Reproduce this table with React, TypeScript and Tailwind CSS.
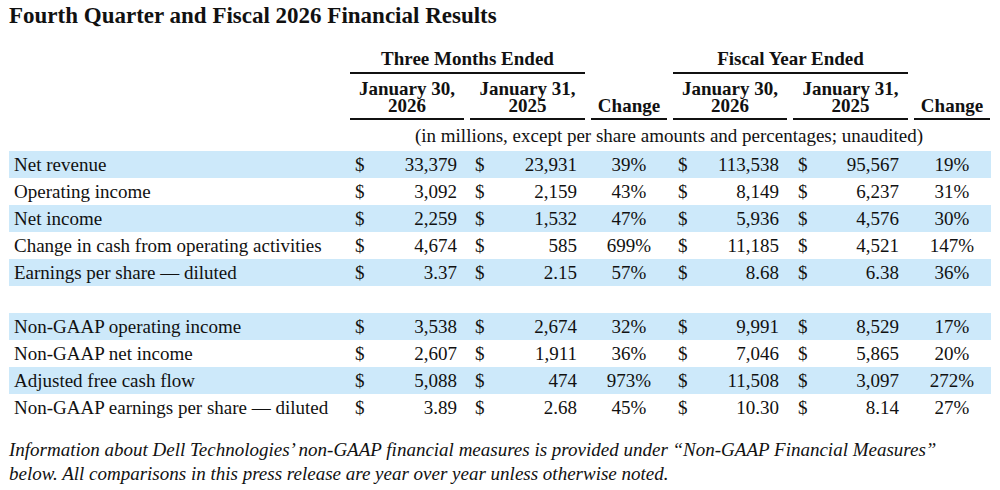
const cols = "grid grid-cols-[338px_120px_121px_82px_120px_121px_80px]";

type Row = { label: string; v: [string, string, string, string, string, string] };

const gaap: Row[] = [
  { label: "Net revenue", v: ["33,379", "23,931", "39%", "113,538", "95,567", "19%"] },
  { label: "Operating income", v: ["3,092", "2,159", "43%", "8,149", "6,237", "31%"] },
  { label: "Net income", v: ["2,259", "1,532", "47%", "5,936", "4,576", "30%"] },
  { label: "Change in cash from operating activities", v: ["4,674", "585", "699%", "11,185", "4,521", "147%"] },
  { label: "Earnings per share — diluted", v: ["3.37", "2.15", "57%", "8.68", "6.38", "36%"] },
];

const nonGaap: Row[] = [
  { label: "Non-GAAP operating income", v: ["3,538", "2,674", "32%", "9,991", "8,529", "17%"] },
  { label: "Non-GAAP net income", v: ["2,607", "1,911", "36%", "7,046", "5,865", "20%"] },
  { label: "Adjusted free cash flow", v: ["5,088", "474", "973%", "11,508", "3,097", "272%"] },
  { label: "Non-GAAP earnings per share — diluted", v: ["3.89", "2.68", "45%", "10.30", "8.14", "27%"] },
];

function Money({ value, pr }: { value: string; pr: string }) {
  return (
    <div className={`flex justify-between pl-[8px] ${pr}`}>
      <span>$</span>
      <span>{value}</span>
    </div>
  );
}

function DataRow({ row, shaded }: { row: Row; shaded: boolean }) {
  const [a, b, c, d, e, f] = row.v;
  return (
    <div className={`${cols} h-[27px] items-center ${shaded ? "bg-[#cde9fa]" : ""}`}>
      <div className="pl-[5px] whitespace-nowrap">{row.label}</div>
      <Money value={a} pr="pr-[10px]" />
      <Money value={b} pr="pr-[11px]" />
      <div className="text-center">{c}</div>
      <Money value={d} pr="pr-[11px]" />
      <Money value={e} pr="pr-[12px]" />
      <div className="pl-[3px] pr-[1px] text-center">{f}</div>
    </div>
  );
}

function DateHead({ top, year }: { top: string; year: string }) {
  return (
    <div className="mx-[3px] border-b-2 border-[#111] pb-[4px] text-center leading-[17px]">
      {top}
      <br />
      {year}
    </div>
  );
}

export default function App() {
  return (
    <div className="h-[490px] w-[1000px] overflow-hidden bg-white font-['Liberation_Serif',serif] text-[19px] text-[#111]">
      <h1 className="pl-[9px] pt-[2px] text-[23px] font-bold leading-[28px]">
        Fourth Quarter and Fiscal 2026 Financial Results
      </h1>

      <div className="ml-[9px] mt-[19px] w-[982px]">
        {/* Period headers */}
        <div className={`${cols} font-bold`}>
          <div />
          <div className="col-span-2 mx-[3px] border-b-2 border-[#111] pb-[3px] text-center leading-[20px]">
            Three Months Ended
          </div>
          <div />
          <div className="col-span-2 mx-[3px] border-b-2 border-[#111] pb-[3px] text-center leading-[20px]">
            Fiscal Year Ended
          </div>
          <div />
        </div>
        <div className={`${cols} mt-[6px] items-end font-bold`}>
          <div />
          <DateHead top="January 30," year="2026" />
          <DateHead top="January 31," year="2025" />
          <div className="mx-[3px] border-b-2 border-[#111] pb-[4px] text-center leading-[17px]">Change</div>
          <DateHead top="January 30," year="2026" />
          <DateHead top="January 31," year="2025" />
          <div className="ml-[3px] mr-[1px] border-b-2 border-[#111] pb-[4px] text-center leading-[17px]">Change</div>
        </div>
        <div className={`${cols} h-[31px] items-center`}>
          <div />
          <div className="col-span-6 text-center leading-[20px]">
            (in millions, except per share amounts and percentages; unaudited)
          </div>
        </div>

        {gaap.map((r, i) => (
          <DataRow key={r.label} row={r} shaded={i % 2 === 0} />
        ))}
        <div className="h-[27px]" />
        {nonGaap.map((r, i) => (
          <DataRow key={r.label} row={r} shaded={i % 2 === 0} />
        ))}
      </div>

      <p className="mt-[17px] pl-[9px] italic leading-[24px] whitespace-nowrap">
        Information about Dell Technologies’ non-GAAP financial measures is provided under “Non-GAAP Financial Measures”
        <br />
        below. All comparisons in this press release are year over year unless otherwise noted.
      </p>
    </div>
  );
}
